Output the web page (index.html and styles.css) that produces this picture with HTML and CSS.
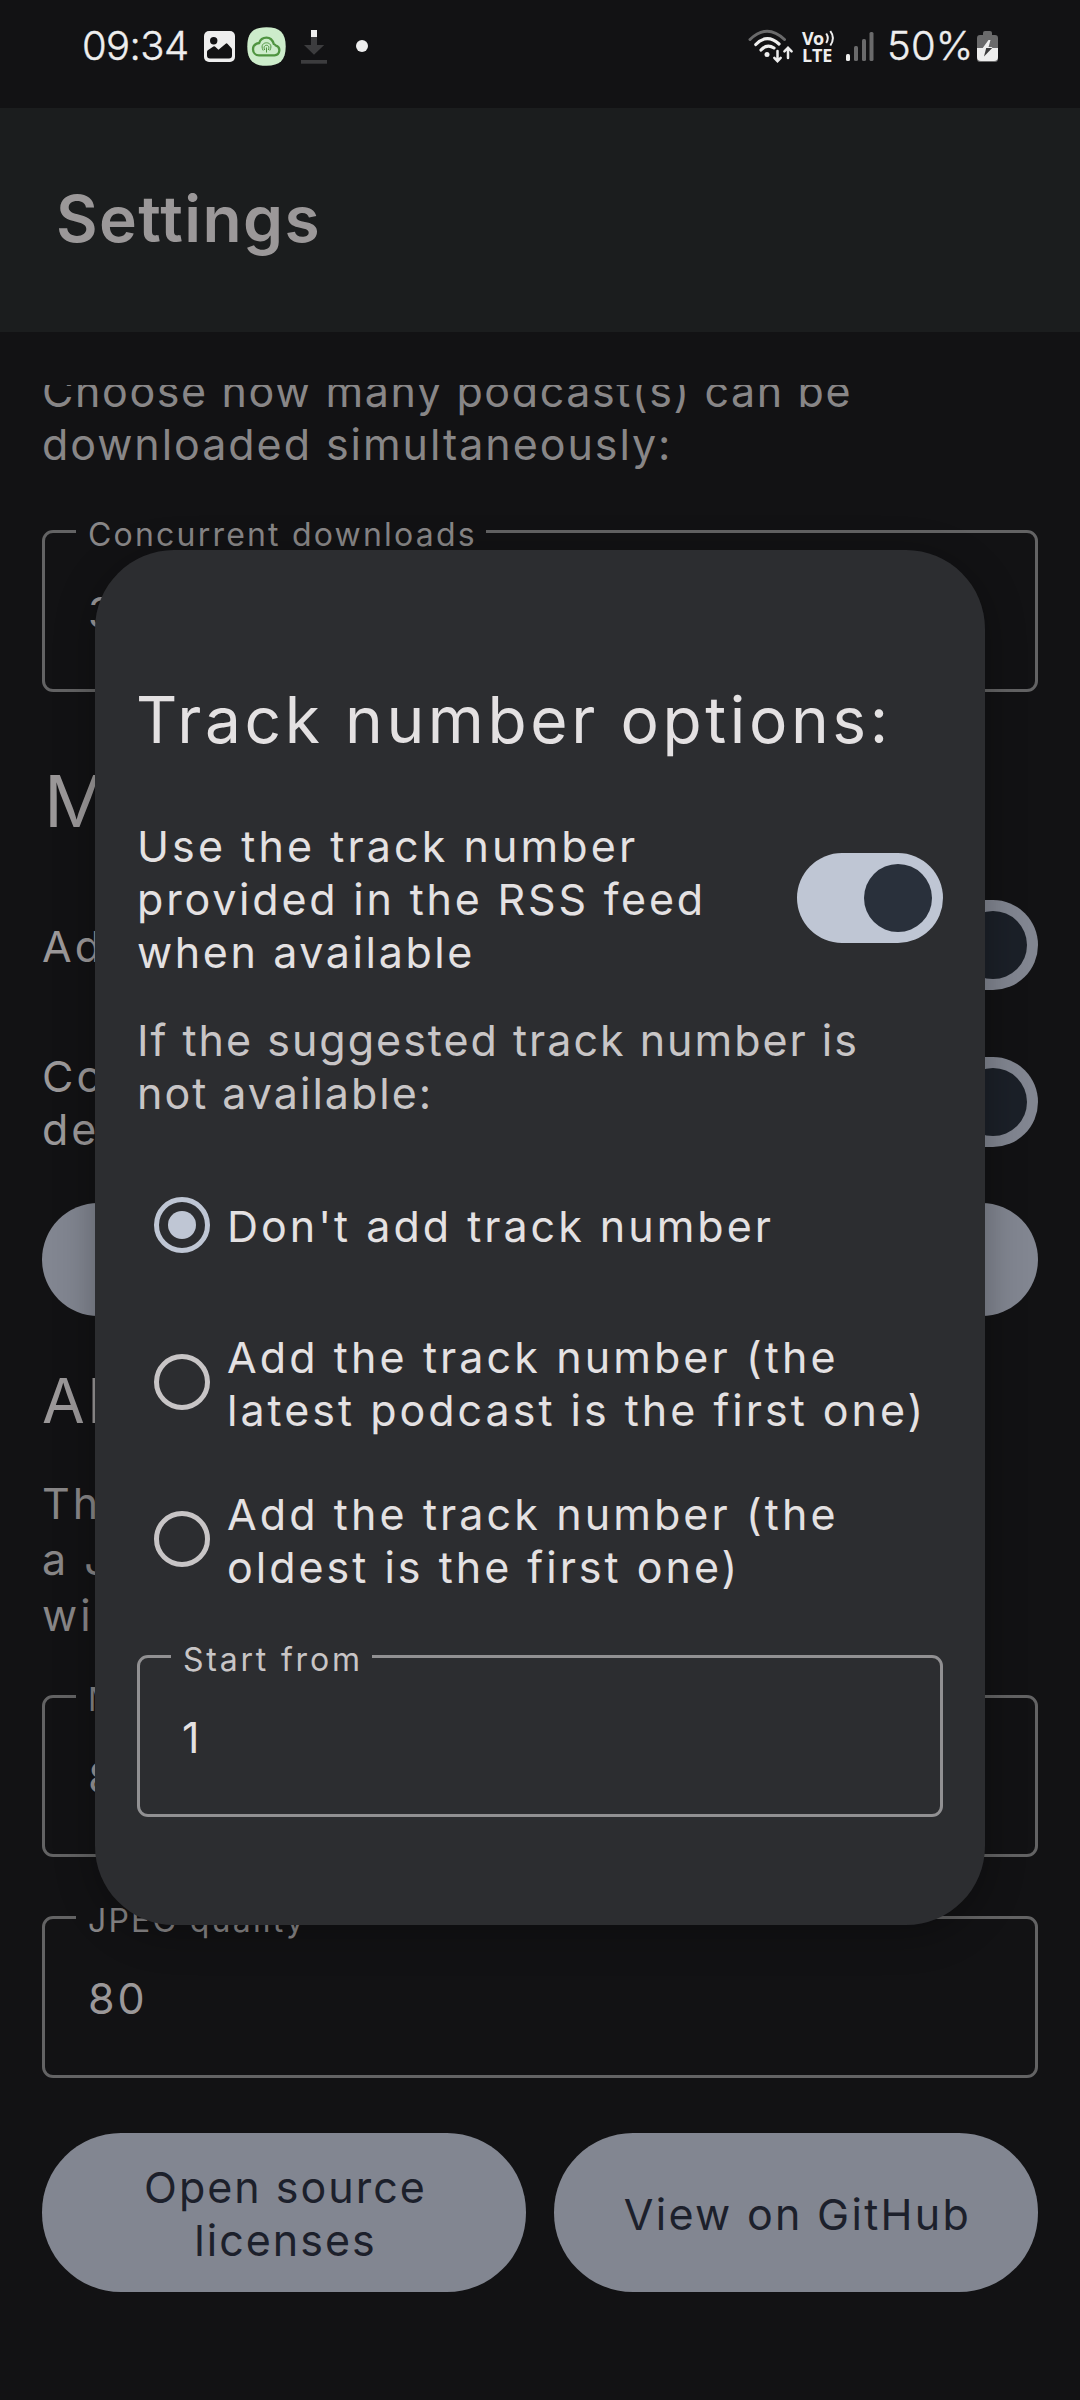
FILE: index.html
```
<!DOCTYPE html>
<html lang="en">
<head>
<meta charset="utf-8">
<title>Settings</title>
<link rel="stylesheet" href="styles.css">
</head>
<body>
<div class="screen">
  <header class="status">
    <div class="status-left">
      <span class="clock">09:34</span>
      <svg class="ic-photo" width="31" height="31" viewBox="0 0 31 31"><rect width="31" height="31" rx="5" fill="#eee"/><circle cx="9.7" cy="9.7" r="3.7" fill="#121214"/><path d="M3 24.5v-3.6q0-1 .8-1.6l5.6-3.8q1-.6 1.8.2l3.3 3.1 7.2-6.1q.9-.7 1.7.1l3.900 4.2q.7.8.7 1.800v5.700q0 3-3 3H6q-3 0-3-3z" fill="#121214"/></svg>
      <svg class="ic-cloud" width="39" height="39" viewBox="0 0 39 39"><path d="M19.500.3C33 .3 38.700 6 38.700 19.500S33 38.700 19.500 38.700.3 33 .3 19.500 6 .3 19.500.3z" fill="#cdeccb"/><path d="M12 28.300h15.500a5 5 0 0 0 1.200-9.800c-.6-1-1.100-1.300-1.900-1.500C25.500 12.500 23 10.600 19.500 10.600c-3.700 0-6.300 2-7.300 5.400C8.300 16.600 6 19 6 22.200c0 3.500 2.500 6.100 6 6.100z" fill="none" stroke="#4f9440" stroke-width="2.300"/><path d="M16.200 23.500c-3-5.500.6-7.700 3.300-7.700s6.300 2.200 3.300 7.700M17.700 23c-1.500-3.500.3-4.700 1.800-4.700s3.300 1.200 1.800 4.700M19.500 20.500v5" fill="none" stroke="#4f9440" stroke-width="1"/></svg>
      <svg class="ic-download" width="26" height="36" viewBox="0 0 26 36"><path d="M10 8h6v8h7.200L13 25.800 3 16h7z" fill="#3c3c3e"/><path d="M10 1h6v7h-6z" fill="#eee"/><path d="M0 31h26v3.700H0z" fill="#3c3c3e"/></svg>
      <span class="more-dot"></span>
    </div>
    <div class="status-right">
      <svg class="ic-wifi" width="46" height="36" viewBox="0 0 46 36"><g fill="none" stroke-linecap="round"><path d="M2 10.500Q19 -6 36.500 10.500" stroke="#6a6a6b" stroke-width="3"/><path d="M7.800 15.500Q19 4 31 15M13 21Q19 14.500 26 19" stroke="#eee" stroke-width="3.200"/><path d="M29.500 22v10M26.300 28.800l3.200 3.400 3.200-3.400M40 29V18.800M36.400 22.300l3.600-3.600 3.600 3.600" stroke="#eee" stroke-width="2.500"/></g><circle cx="19" cy="25.500" r="2.500" fill="#eee"/></svg>
      <span class="volte"><span class="vo">Vo<svg width="10" height="17" viewBox="0 0 10 17"><path d="M1.200 3.500q3.200 4.500 0 9.500M5.300 1q5.200 7 0 14.500" fill="none" stroke="#eee" stroke-width="2"/></svg></span><span class="lte">LTE</span></span>
      <svg class="ic-signal" width="28" height="31" viewBox="0 0 28 31"><g fill="#6a6a6b"><rect x="8" y="15" width="4" height="15" rx="1.500"/><rect x="16" y="8" width="4" height="22" rx="1.500"/><rect x="23.500" y="1" width="4" height="29" rx="1.500"/></g><rect x="0" y="23" width="4" height="7" rx="1.500" fill="#eee"/></svg>
      <span class="percent">50%</span>
      <svg class="ic-battery" width="21" height="31" viewBox="0 0 21 31"><path d="M6 2q0-2 2-2h5q2 0 2 2v2h3q3 0 3 3v21q0 3-3 3H3q-3 0-3-3V7q0-3 3-3h3z" fill="#6a6a6b"/><path d="M0 17h21v9q0 4-4 4H4q-4 0-4-4z" fill="#eee"/><path d="M11.500 9 5 18h4l-2.500 7.500L15.500 16h-4L13.500 9z" fill="#eee"/><path d="M9.200 17h6L7 25.500z" fill="#3a3a3b"/></svg>
    </div>
  </header>

  <div class="appbar"><h1>Settings</h1></div>

  <main class="list">
    <p class="intro"><span class="line t1">Choose how many podcast(s) can be</span><span class="line t2">downloaded simultaneously:</span></p>
    <div class="field f-downloads"><span class="label">Concurrent downloads</span>3</div>
    <h2 class="heading-lg">M</h2>
    <div class="row row-a"><span class="row-text">Ad</span><span class="switch"><i></i></span></div>
    <div class="row row-b"><span class="row-text">Co<br>de</span><span class="switch"><i></i></span></div>
    <div class="pill wide"></div>
    <h3 class="heading-md">Al</h3>
    <p class="about">Th<br>a J<br>wi</p>
    <div class="field f-size"><span class="label">M</span>8</div>
    <div class="field f-quality"><span class="label jpeg">JPEG quality</span>80</div>
    <div class="buttons">
      <div class="pill"><span>Open source<br>licenses</span></div>
      <div class="pill"><span class="github">View on GitHub</span></div>
    </div>
  </main>

  <section class="dialog">
    <h2>Track number options:</h2>
    <div class="feed"><p><span class="line d1">Use the track number</span><span class="line d2">provided in the RSS feed</span><span class="line d3">when available</span></p><span class="switch"><i></i></span></div>
    <p class="hint">If the suggested track number is<br>not available:</p>
    <div class="radios">
      <div class="radio on"><i></i><span>Don't add track number</span></div>
      <div class="radio"><i></i><span><span class="line d1">Add the track number (the</span>latest podcast is the first one)</span></div>
      <div class="radio"><i></i><span><span class="line d1">Add the track number (the</span>oldest is the first one)</span></div>
    </div>
    <div class="field f-start"><span class="label start">Start from</span>1</div>
  </section>
</div>
</body>
</html>
```
FILE: styles.css
```
* { box-sizing: border-box; }
body { margin: 0; background: #121214; }
h1, h2, h3, p { margin: 0; font-weight: 400; }
.screen {
  position: relative; width: 1080px; height: 2400px; overflow: hidden;
  background: #121214; color: #9b9899;
  font: 400 43px/53px Inter, "Open Sans", sans-serif;
  letter-spacing: 3px; white-space: nowrap;
}
.line { display: block; }

/* status bar */
.status { height: 108px; display: flex; justify-content: space-between; padding: 0 82px 0 81px; color: #eee; }
.status-left, .status-right { display: flex; align-items: flex-start; }
.clock, .percent { font-size: 40px; font-weight: 300; line-height: 50px; letter-spacing: -.6px; margin-top: 21px; -webkit-text-stroke: .4px #eee; }
.clock { width: 122px; margin-left: 1px; }
.ic-photo { margin-top: 31px; }
.ic-cloud { margin: 27px 0 0 12px; }
.ic-download { margin: 29px 0 0 15px; }
.more-dot { width: 12px; height: 12px; border-radius: 50%; background: #eee; margin: 40px 0 0 29px; }
.ic-wifi { margin-top: 29px; }
.volte { display: flex; flex-direction: column; margin: 30px 0 0 8px; width: 31px; font: 700 18px/17px "Open Sans", sans-serif; letter-spacing: -.6px; }
.vo { display: flex; height: 17px; }
.vo svg { flex: none; margin-left: 1px; }
.lte { letter-spacing: -.2px; }
.ic-signal { margin: 31px 0 0 13px; }
.percent { width: 91px; margin-left: 13px; letter-spacing: .2px; }
.ic-battery { margin-top: 31px; margin-left: -1px; }

.appbar { height: 224px; background: #1b1d1e; padding: 73px 56px; }
h1 { font-size: 64px; line-height: 76px; font-weight: 600; letter-spacing: 1.4px; }

/* settings list behind the dialog */
.list { height: 2015px; margin-top: 53px; padding: 0 42px; overflow: hidden; }
.intro { margin-top: -20px; color: #888687; }
.t1 { letter-spacing: 1.6px; }
.t2 { letter-spacing: 1.95px; }
.field { position: relative; height: 162px; border: 3px solid #636364; border-radius: 11px; padding: 53px 0 0 43px; letter-spacing: 2.8px; }
.label { position: absolute; left: 31px; top: -17px; padding: 0 9px 0 12px; background: #121214; color: #888687; font-size: 32px; line-height: 38px; letter-spacing: 2.2px; }
.f-downloads { margin-top: 59px; }
.heading-lg { font-size: 72px; line-height: 84px; margin-top: 67px; padding-left: 2px; }
.row { display: flex; align-items: center; justify-content: space-between; }
.row-text { padding-top: 3px; }
.row-a { margin-top: 57px; }
.row-b { margin-top: 57px; }
.switch { flex: none; display: flex; align-items: center; justify-content: flex-end; width: 146px; height: 90px; padding-right: 11px; border-radius: 45px; background: #828691; }
.switch i { width: 68px; height: 68px; border-radius: 50%; background: #1b2028; }
.pill { display: flex; align-items: center; justify-content: center; padding: 3px 0 0 3px; border-radius: 79px; background: #828691; color: #1c202b; text-align: center; letter-spacing: 2px; }
.wide { height: 113px; margin-top: 47px; }
.heading-md { font-size: 62px; line-height: 76px; margin-top: 47px; }
.about { line-height: 56px; margin-top: 36px; color: #888687; }
.f-size { margin-top: 52px; }
.f-quality { margin-top: 59px; }
.jpeg { letter-spacing: 2.2px; }
.buttons { display: grid; grid-template-columns: 1fr 1fr; gap: 28px; height: 159px; margin-top: 55px; }
.github { letter-spacing: 2.3px; }

/* dialog */
.dialog { position: absolute; left: 95px; top: 550px; width: 890px; height: 1375px; padding: 132px 42px 0; border-radius: 79px; background: #2c2d30; color: #e4e1e2; box-shadow: 0 8px 40px rgba(0, 0, 0, .3); }
.dialog h2 { font-size: 64px; line-height: 76px; letter-spacing: 3.6px; margin-left: -1px; }
.feed { display: flex; justify-content: space-between; align-items: flex-start; margin-top: 62px; }
.d1 { letter-spacing: 3.1px; }
.d2 { letter-spacing: 2.8px; }
.d3 { letter-spacing: 2.6px; }
.dialog .switch { margin-top: 33px; background: #bfc6d4; }
.dialog .switch i { background: #29303b; }
.hint { margin-top: 35px; color: #c8c5c6; letter-spacing: 2px; }
.radios { display: flex; flex-direction: column; gap: 47px; margin-top: 50px; padding-left: 17px; }
.radio { display: flex; align-items: center; gap: 17px; height: 110px; }
.radio > span { padding-top: 3px; }
.radio i { display: flex; align-items: center; justify-content: center; width: 56px; height: 56px; border: 5.6px solid #c8c5c6; border-radius: 50%; }
.on i { border-color: #bfc6d4; }
.on i::before { content: ""; width: 28px; height: 28px; border-radius: 50%; background: #bfc6d4; }
.f-start { margin-top: 61px; padding-left: 42px; border-color: #919092; }
.start { background: #2c2d30; color: #c8c5c6; letter-spacing: 2.8px; }
```
